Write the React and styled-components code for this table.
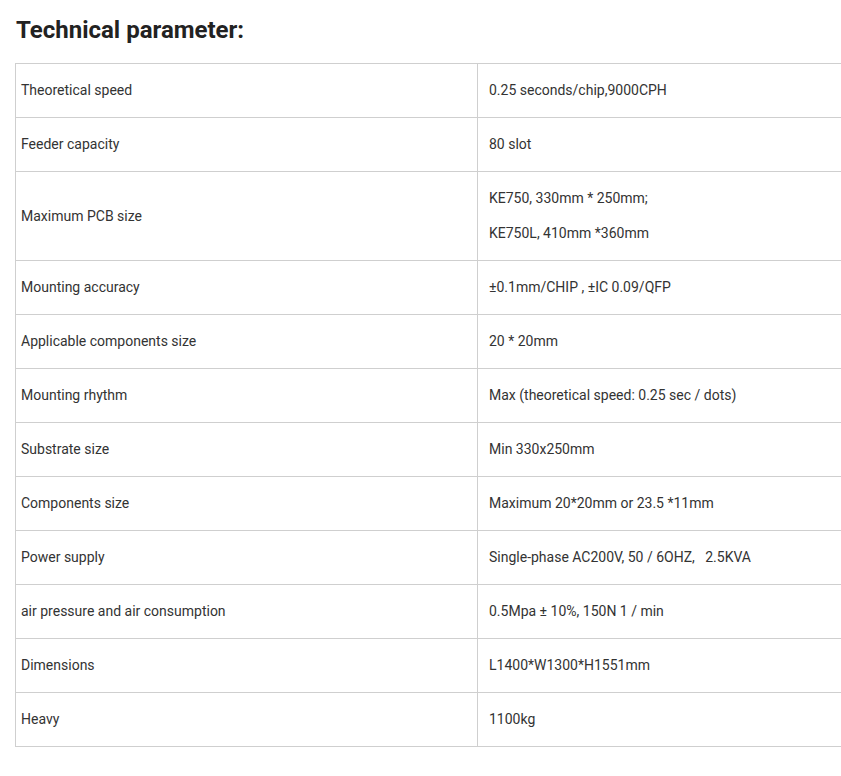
import React from "react";
import styled, { createGlobalStyle } from "styled-components";

const Global = createGlobalStyle`
  html, body { margin: 0; padding: 0; background: #fff; overflow: hidden; }
  body { font-family: Roboto, "Liberation Sans", Arial, sans-serif; color: #333; }
`;

const Page = styled.div`
  padding: 15px 0 0 15px;
  width: 826px;
`;

const Heading = styled.h2`
  margin: 0 0 18px 1px;
  font-size: 24px;
  line-height: 30px;
  font-weight: 700;
  color: #222;
`;

const Table = styled.table`
  border-collapse: collapse;
  width: 100%;
  table-layout: fixed;
  border-left: 1px solid #cfcfcf;
  font-size: 14px;
  line-height: 21px;
`;

const Row = styled.tr`
  border-top: 1px solid #cfcfcf;
  border-bottom: 1px solid #cfcfcf;
`;

const Cell = styled.td`
  vertical-align: middle;
  padding: 16px 4px 16px ${(p) => (p.$value ? "11px" : "5px")};
  width: ${(p) => (p.$value ? "auto" : "452px")};
  border-right: ${(p) => (p.$value ? "none" : "1px solid #cfcfcf")};
  color: #333;
  white-space: nowrap;
`;

const Lines = styled.div`
  display: flex;
  flex-direction: column;
  gap: 14px;
`;

const rows = [
  ["Theoretical speed", ["0.25 seconds/chip,9000CPH"]],
  ["Feeder capacity", ["80 slot"]],
  ["Maximum PCB size", ["KE750, 330mm * 250mm;", "KE750L, 410mm *360mm"]],
  ["Mounting accuracy", ["±0.1mm/CHIP , ±IC 0.09/QFP"]],
  ["Applicable components size", ["20 * 20mm"]],
  ["Mounting rhythm", ["Max (theoretical speed: 0.25 sec / dots)"]],
  ["Substrate size", ["Min 330x250mm"]],
  ["Components size", ["Maximum 20*20mm or 23.5 *11mm"]],
  ["Power supply", ["Single-phase AC200V, 50 / 6OHZ,\u00a0\u00a0 2.5KVA"]],
  ["air pressure and air consumption", ["0.5Mpa ± 10%, 150N 1 / min"]],
  ["Dimensions", ["L1400*W1300*H1551mm"]],
  ["Heavy", ["1100kg"]],
];

export default function App() {
  return (
    <Page>
      <Global />
      <Heading>Technical parameter:</Heading>
      <Table>
        <tbody>
          {rows.map(([label, values]) => (
            <Row key={label}>
              <Cell>{label}</Cell>
              <Cell $value>
                <Lines>
                  {values.map((v) => (
                    <span key={v}>{v}</span>
                  ))}
                </Lines>
              </Cell>
            </Row>
          ))}
        </tbody>
      </Table>
    </Page>
  );
}
